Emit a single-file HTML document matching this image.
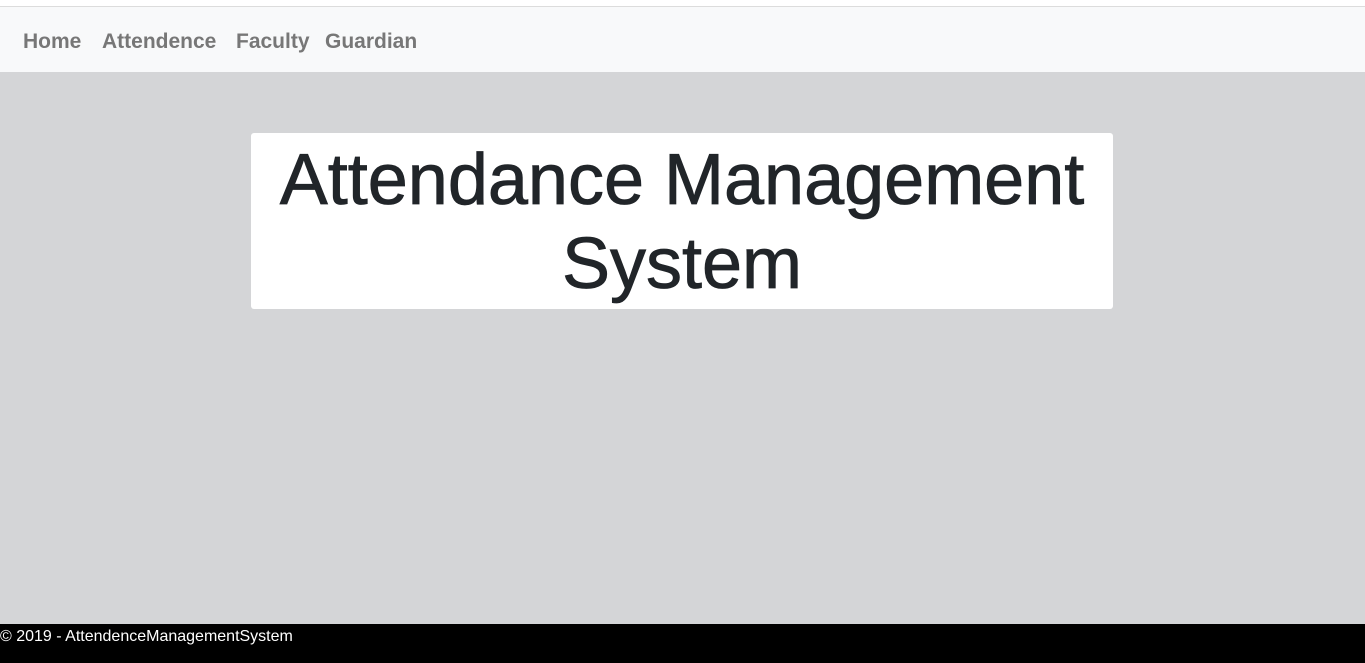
<!DOCTYPE html>
<html><head><style>
body{margin:0;width:1365px;height:663px;overflow:hidden;background:#d4d5d7;font-family:"Liberation Sans",sans-serif;position:relative}
.top{position:absolute;left:0;top:0;width:1365px;height:6px;background:#fff;border-bottom:1px solid #dcdcdc}
.nav{position:absolute;left:0;top:7px;width:1365px;height:65px;background:#f8f9fa}
.nav a{position:absolute;top:23px;font-weight:bold;font-size:21px;color:#777;text-decoration:none}
.card{position:absolute;left:251px;top:133px;width:862px;height:176px;background:#fff;border-radius:3px;text-align:center;color:#212529;font-size:72px;line-height:84px;padding-top:5px;box-sizing:border-box;-webkit-text-stroke:0.8px #212529}
.foot{position:absolute;left:0;top:624px;width:1365px;height:39px;background:#000;color:#fff;font-size:16px;line-height:26px}
</style></head><body>
<div class="top"></div>
<div class="nav">
<a style="left:23px">Home</a><a style="left:102px">Attendence</a><a style="left:236px">Faculty</a><a style="left:325px">Guardian</a>
</div>
<div class="card">Attendance Management<br>System</div>
<div class="foot">© 2019 - AttendenceManagementSystem</div>
</body></html>
